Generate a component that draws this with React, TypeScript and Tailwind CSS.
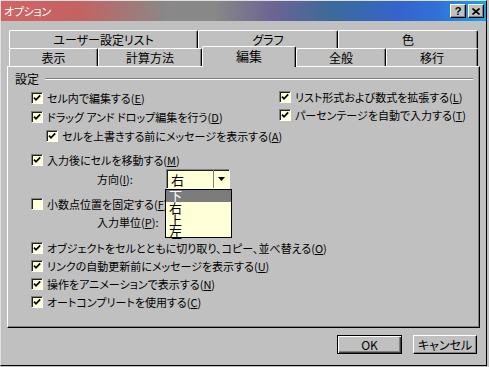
import React from "react";

const FONT = "font-['Noto_Sans_CJK_JP','Noto_Sans',sans-serif] [font-feature-settings:'palt'_1]";

function Label({ text, k }: { text: string; k?: string }) {
  return (
    <span className="whitespace-nowrap">
      {text}
      {k && (
        <>
          (<span className="underline underline-offset-1">{k}</span>)
        </>
      )}
    </span>
  );
}

function CheckBox({ checked = true }: { checked?: boolean }) {
  return (
    <span className="w-[12px] h-[12px] shrink-0 bg-[#ffffd8] border border-t-[#808080] border-l-[#808080] border-b-white border-r-white shadow-[inset_1px_1px_0_#202020] grid place-items-center">
      {checked && (
        <svg width="8" height="8" viewBox="0 0 8 8">
          <path d="M1 3.6 L3 5.8 L7.2 1.4" fill="none" stroke="#000" strokeWidth="1.7" />
        </svg>
      )}
    </span>
  );
}

function Check({ text, k, checked, className = "" }: { text: string; k: string; checked?: boolean; className?: string }) {
  return (
    <div className={`flex items-center gap-[4px] h-[18px] ${className}`}>
      <CheckBox checked={checked} />
      <Label text={text} k={k} />
    </div>
  );
}

function Tab({ w, label, selected }: { w: number; label: string; selected?: boolean }) {
  return (
    <div
      style={{ width: w }}
      className={`shrink-0 flex items-center justify-center bg-[#c0c0c0] text-[12px] border-l border-t border-r border-l-white border-t-white border-r-black rounded-t-[2px] shadow-[inset_-1px_0_0_#808080] ${
        selected ? "h-[21px] -mb-[1px] relative z-10 text-[13px] pb-[3px]" : "h-full"
      }`}
    >
      {label}
    </div>
  );
}

export default function App() {
  return (
    <div className={`w-[489px] h-[367px] bg-[#c0c0c0] text-[11px] leading-none text-black ${FONT}`}>
      <div className="w-[487px] h-[366px] border border-t-[#dfdfdf] border-l-[#dfdfdf] border-r-black border-b-black flex flex-col">
        {/* title bar */}
        <div className="h-[20px] shrink-0 flex items-center justify-between pl-[3px] pr-[2px] bg-[linear-gradient(to_right,#d06464_0%,#c46262_16%,#8a8888_34%,#888888_44%,#6c6494_56%,#3c6a9a_68%,#3464cc_82%,#3270d8_90%,#18a4e4_100%)]">
          <span className="text-white text-[11px] tracking-[-0.3px]">オプション</span>
          <div className="flex gap-[2px]">
            <span className="w-[16px] h-[14px] bg-[#c0c0c0] border border-t-white border-l-white border-r-black border-b-black shadow-[inset_-1px_-1px_0_#808080] grid place-items-center text-[11px] font-bold font-['Liberation_Sans',sans-serif]">?</span>
            <span className="w-[16px] h-[14px] bg-[#c0c0c0] border border-t-white border-l-white border-r-black border-b-black shadow-[inset_-1px_-1px_0_#808080] grid place-items-center">
              <svg width="8" height="7" viewBox="0 0 8 7">
                <path d="M0.5 0.5 L7.5 6.5 M7.5 0.5 L0.5 6.5" stroke="#000" strokeWidth="1.6" />
              </svg>
            </span>
          </div>
        </div>

        {/* tabs */}
        <div className="ml-[8px] mt-[9px] w-[469px]">
          <div className="flex h-[18px]">
            <Tab w={189} label="ユーザー設定リスト" />
            <Tab w={140} label="グラフ" />
            <Tab w={140} label="色" />
          </div>
          <div className="flex h-[18px] items-end">
            <Tab w={89} label="表示" />
            <Tab w={104} label="計算方法" />
            <Tab w={94} label="編集" selected />
            <Tab w={90} label="全般" />
            <Tab w={92} label="移行" />
          </div>
        </div>

        {/* panel */}
        <div className="ml-[6px] w-[473px] h-[262px] border border-t-white border-l-white border-r-black border-b-black shadow-[inset_-1px_-1px_0_#808080] flex flex-col">
          <div className="mt-[3px] h-[18px] flex items-center pl-[7px] gap-[6px] text-[12px]">
            <span>設定</span>
            <div className="flex-1 mr-[6px] h-[2px] border-t border-t-[#808080] border-b border-b-white" />
          </div>

          <div className="mt-[1px] flex pl-[23px]">
            <Check className="w-[248px]" text="セル内で編集する" k="E" />
            <Check className="-mt-[1px]" text="リスト形式および数式を拡張する" k="L" />
          </div>
          <div className="mt-[1px] flex pl-[23px]">
            <Check className="w-[248px]" text="ドラッグ アンド ドロップ編集を行う" k="D" />
            <Check className="-mt-[2px]" text="パーセンテージを自動で入力する" k="T" />
          </div>
          <Check className="mt-[1px] ml-[38px]" text="セルを上書きする前にメッセージを表示する" k="A" />

          <Check className="mt-[6px] ml-[23px]" text="入力後にセルを移動する" k="M" />
          <div className="h-[20px] flex items-center pl-[89px]">
            <span className="w-[69px]">
              <Label text="方向" k="I" />:
            </span>
            <div className="relative w-[64px] h-[20px] bg-[#ffffd8] border border-t-[#808080] border-l-[#808080] border-r-white border-b-white shadow-[inset_1px_1px_0_#202020] flex items-center text-[13px]">
              <span className="pl-[4px] flex-1">右</span>
              <span className="w-[16px] h-full border-l border-l-[#808080] grid place-items-center">
                <svg width="7" height="4" viewBox="0 0 7 4">
                  <path d="M0 0 H7 L3.5 4 Z" fill="#000" />
                </svg>
              </span>
              <div className="absolute z-20 left-[-2px] top-[19px] w-[67px] h-[49px] bg-[#ffffd8] border border-black text-[13px]">
                <div className="h-[12px] bg-[#7c7c7c] text-white pl-[3px] leading-[12px] overflow-hidden">下</div>
                <div className="h-[12px] pl-[3px] leading-[12px]">右</div>
                <div className="h-[12px] pl-[3px] leading-[12px]">上</div>
                <div className="h-[12px] pl-[3px] leading-[12px]">左</div>
              </div>
            </div>
          </div>

          <Check className="mt-[6px] ml-[23px]" checked={false} text="小数点位置を固定する" k="F" />
          <div className="h-[18px] flex items-center pl-[89px]">
            <span>
              <Label text="入力単位" k="P" />:
            </span>
          </div>

          <Check className="mt-[8px] ml-[23px]" text="オブジェクトをセルとともに切り取り、コピー、並べ替える" k="O" />
          <Check className="ml-[23px]" text="リンクの自動更新前にメッセージを表示する" k="U" />
          <Check className="ml-[23px]" text="操作をアニメーションで表示する" k="N" />
          <Check className="ml-[23px]" text="オートコンプリートを使用する" k="C" />
        </div>

        {/* buttons */}
        <div className="mt-[7px] flex justify-end gap-[11px] pr-[9px]">
          <button className="w-[65px] h-[19px] border border-black bg-[#c0c0c0] shadow-[inset_1px_1px_0_#fff,inset_-1px_-1px_0_#404040,inset_-2px_-2px_0_#808080] text-[12px] leading-none">
            OK
          </button>
          <button className="w-[64px] h-[19px] border border-t-white border-l-white border-r-black border-b-black bg-[#c0c0c0] shadow-[inset_-1px_-1px_0_#808080] text-[12px] leading-none">
            キャンセル
          </button>
        </div>
      </div>
    </div>
  );
}
